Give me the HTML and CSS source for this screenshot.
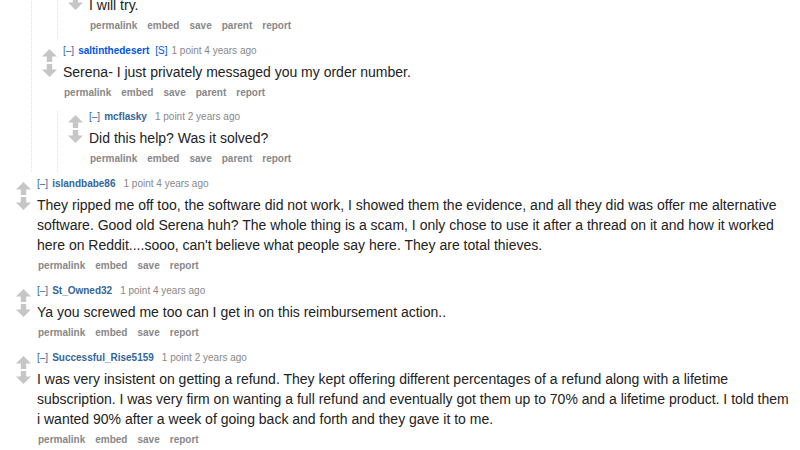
FILE: index.html
```html
<!DOCTYPE html>
<html>
<head>
<meta charset="utf-8">
<link rel="stylesheet" href="styles.css">
</head>
<body>
<div class="sitetable">

  <div class="comment">
    <div class="child">
      <div class="comment">
        <div class="child">
          <div class="comment">
            <div class="entry-row">
              <div class="midcol"><div class="arrow up"></div><div class="arrow down"></div></div>
              <div class="entry">
                <div class="tagline"></div>
                <div class="md">I will try.</div>
                <ul class="flat-list"><li>permalink</li><li>embed</li><li>save</li><li>parent</li><li>report</li></ul>
              </div>
            </div>
          </div>
        </div>
      </div>

      <div class="comment">
        <div class="entry-row">
          <div class="midcol"><div class="arrow up"></div><div class="arrow down"></div></div>
          <div class="entry">
            <div class="tagline"><span class="expand">[–]</span><a class="author submitter with-attrs">saltinthedesert</a><span class="userattrs">[<span class="submitter">S</span>]</span><span class="score">1 point</span> <span class="time">4 years ago</span></div>
            <div class="md">Serena- I just privately messaged you my order number.</div>
            <ul class="flat-list"><li>permalink</li><li>embed</li><li>save</li><li>parent</li><li>report</li></ul>
          </div>
        </div>
        <div class="child">
          <div class="comment">
            <div class="entry-row">
              <div class="midcol"><div class="arrow up"></div><div class="arrow down"></div></div>
              <div class="entry">
                <div class="tagline"><span class="expand">[–]</span><a class="author">mcflasky</a><span class="score">1 point</span> <span class="time">2 years ago</span></div>
                <div class="md">Did this help? Was it solved?</div>
                <ul class="flat-list"><li>permalink</li><li>embed</li><li>save</li><li>parent</li><li>report</li></ul>
              </div>
            </div>
          </div>
        </div>
      </div>
    </div>
  </div>

  <div class="comment">
    <div class="entry-row">
      <div class="midcol"><div class="arrow up"></div><div class="arrow down"></div></div>
      <div class="entry">
        <div class="tagline"><span class="expand">[–]</span><a class="author">islandbabe86</a><span class="score">1 point</span> <span class="time">4 years ago</span></div>
        <div class="md">They ripped me off too, the software did not work, I showed them the evidence, and all they did was offer me alternative software. Good old Serena huh? The whole thing is a scam, I only chose to use it after a thread on it and how it worked here on Reddit....sooo, can't believe what people say here. They are total thieves.</div>
        <ul class="flat-list"><li>permalink</li><li>embed</li><li>save</li><li>report</li></ul>
      </div>
    </div>
  </div>

  <div class="comment">
    <div class="entry-row">
      <div class="midcol"><div class="arrow up"></div><div class="arrow down"></div></div>
      <div class="entry">
        <div class="tagline"><span class="expand">[–]</span><a class="author">St_Owned32</a><span class="score">1 point</span> <span class="time">4 years ago</span></div>
        <div class="md">Ya you screwed me too can I get in on this reimbursement action..</div>
        <ul class="flat-list"><li>permalink</li><li>embed</li><li>save</li><li>report</li></ul>
      </div>
    </div>
  </div>

  <div class="comment">
    <div class="entry-row">
      <div class="midcol"><div class="arrow up"></div><div class="arrow down"></div></div>
      <div class="entry">
        <div class="tagline"><span class="expand">[–]</span><a class="author">Successful_Rise5159</a><span class="score">1 point</span> <span class="time">2 years ago</span></div>
        <div class="md">I was very insistent on getting a refund. They kept offering different percentages of a refund along with a lifetime subscription. I was very firm on wanting a full refund and eventually got them up to 70% and a lifetime product. I told them i wanted 90% after a week of going back and forth and they gave it to me.</div>
        <ul class="flat-list"><li>permalink</li><li>embed</li><li>save</li><li>report</li></ul>
      </div>
    </div>
  </div>

</div>
</body>
</html>
```
FILE: styles.css
```css
html, body {
  margin: 0;
  padding: 0;
  background: #ffffff;
  overflow: hidden;
}

body {
  font-family: "Liberation Sans", Arial, sans-serif;
  color: #222222;
}

.sitetable {
  margin-top: -22px;
  padding-left: 6px;
  padding-right: 7px;
}

.comment {
  margin-left: 10px;
}

.comment + .comment {
  margin-top: 6px;
}

.entry-row {
  display: flex;
  align-items: flex-start;
}

.midcol {
  width: 15px;
  flex: none;
  margin-right: 6px;
  padding-top: 4px;
  display: flex;
  flex-direction: column;
  gap: 2px;
}

.arrow {
  width: 15px;
  height: 13px;
  background: #c6c6c6;
}

.arrow.up {
  clip-path: polygon(50% 0, 100% 58%, 68% 58%, 68% 100%, 32% 100%, 32% 58%, 0 58%);
}

.arrow.down {
  clip-path: polygon(32% 0, 68% 0, 68% 42%, 100% 42%, 50% 100%, 0 42%, 32% 42%);
}

.entry {
  flex: 1;
  min-width: 0;
  padding-bottom: 7px;
}

.child {
  margin-left: 15px;
  border-left: 1px dotted #ddddff;
}

.entry-row + .child {
  margin-top: 5px;
}

.tagline {
  height: 12px;
  font-size: 10px;
  line-height: 12px;
  color: #888888;
  white-space: nowrap;
}

.expand {
  color: #336699;
  margin-right: 4px;
}

.author {
  color: #336699;
  font-weight: bold;
  margin-right: 8px;
}

.author.with-attrs {
  margin-right: 6px;
}

.author.submitter,
.submitter {
  color: #0055df;
}

.userattrs {
  color: #0055df;
  margin-right: 4px;
}

.userattrs .submitter {
  font-weight: normal;
}

.md {
  margin-top: 4.5px;
  font-size: 14px;
  line-height: 20px;
  color: #222222;
  max-width: 60em;
}

.flat-list {
  list-style: none;
  margin: 5.5px 0 0 1px;
  padding: 0;
  display: flex;
  gap: 10px;
  font-size: 10px;
  line-height: 12px;
  font-weight: bold;
  color: #888888;
}
```
